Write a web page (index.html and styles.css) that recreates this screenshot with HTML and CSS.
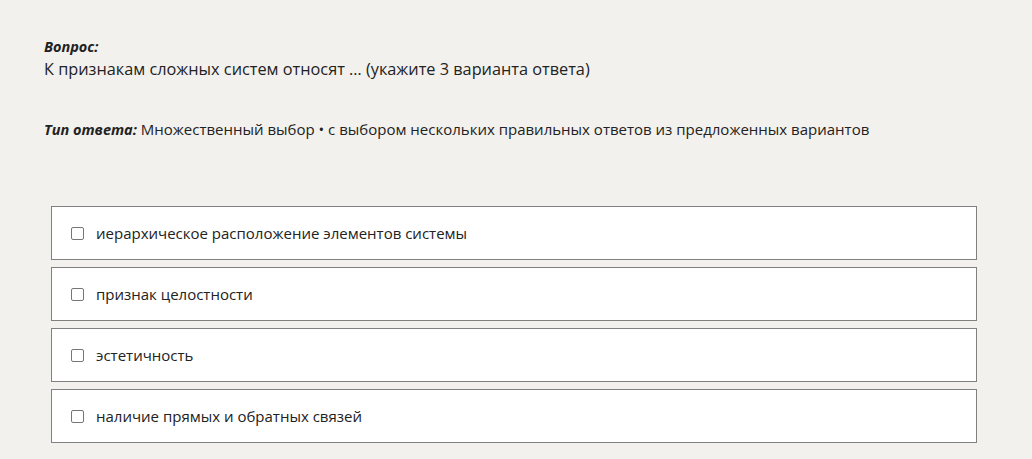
FILE: index.html
```html
<!DOCTYPE html>
<html lang="ru">
<head>
<meta charset="utf-8">
<link rel="stylesheet" href="styles.css">
</head>
<body>
<div class="page">
  <div class="question">
    <div class="label">Вопрос:</div>
    <div class="qtext">К признакам сложных систем относят … (укажите 3 варианта ответа)</div>
  </div>
  <div class="type"><span class="label">Тип ответа:</span> Множественный выбор • с выбором нескольких правильных ответов из предложенных вариантов</div>
  <div class="options">
    <label class="option"><span class="box"></span><span>иерархическое расположение элементов системы</span></label>
    <label class="option"><span class="box"></span><span>признак целостности</span></label>
    <label class="option"><span class="box"></span><span>эстетичность</span></label>
    <label class="option"><span class="box"></span><span>наличие прямых и обратных связей</span></label>
  </div>
</div>
</body>
</html>
```
FILE: styles.css
```css
html, body {
  margin: 0;
  padding: 0;
  background: #f2f1ee;
}
body {
  font-family: "Open Sans", "Noto Sans", sans-serif;
  font-size: 15px;
  color: #222;
}
.page {
  padding: 36px 55px 0 44px;
}
.label {
  font-weight: 700;
  font-style: italic;
  font-size: 14.5px;
}
.question {
  line-height: 22px;
}
.qtext {
  font-size: 16.3px;
}
.type {
  margin-top: 38px;
  line-height: 22px;
}
.options {
  margin: 65px 0 0 7px;
  display: flex;
  flex-direction: column;
  gap: 7px;
}
.option {
  display: flex;
  align-items: center;
  height: 52px;
  background: #fff;
  border: 1px solid #808080;
  padding-left: 19px;
  gap: 12px;
}
.box {
  width: 11px;
  height: 11px;
  border: 1px solid #767676;
  border-radius: 2px;
  background: #fff;
}
```
